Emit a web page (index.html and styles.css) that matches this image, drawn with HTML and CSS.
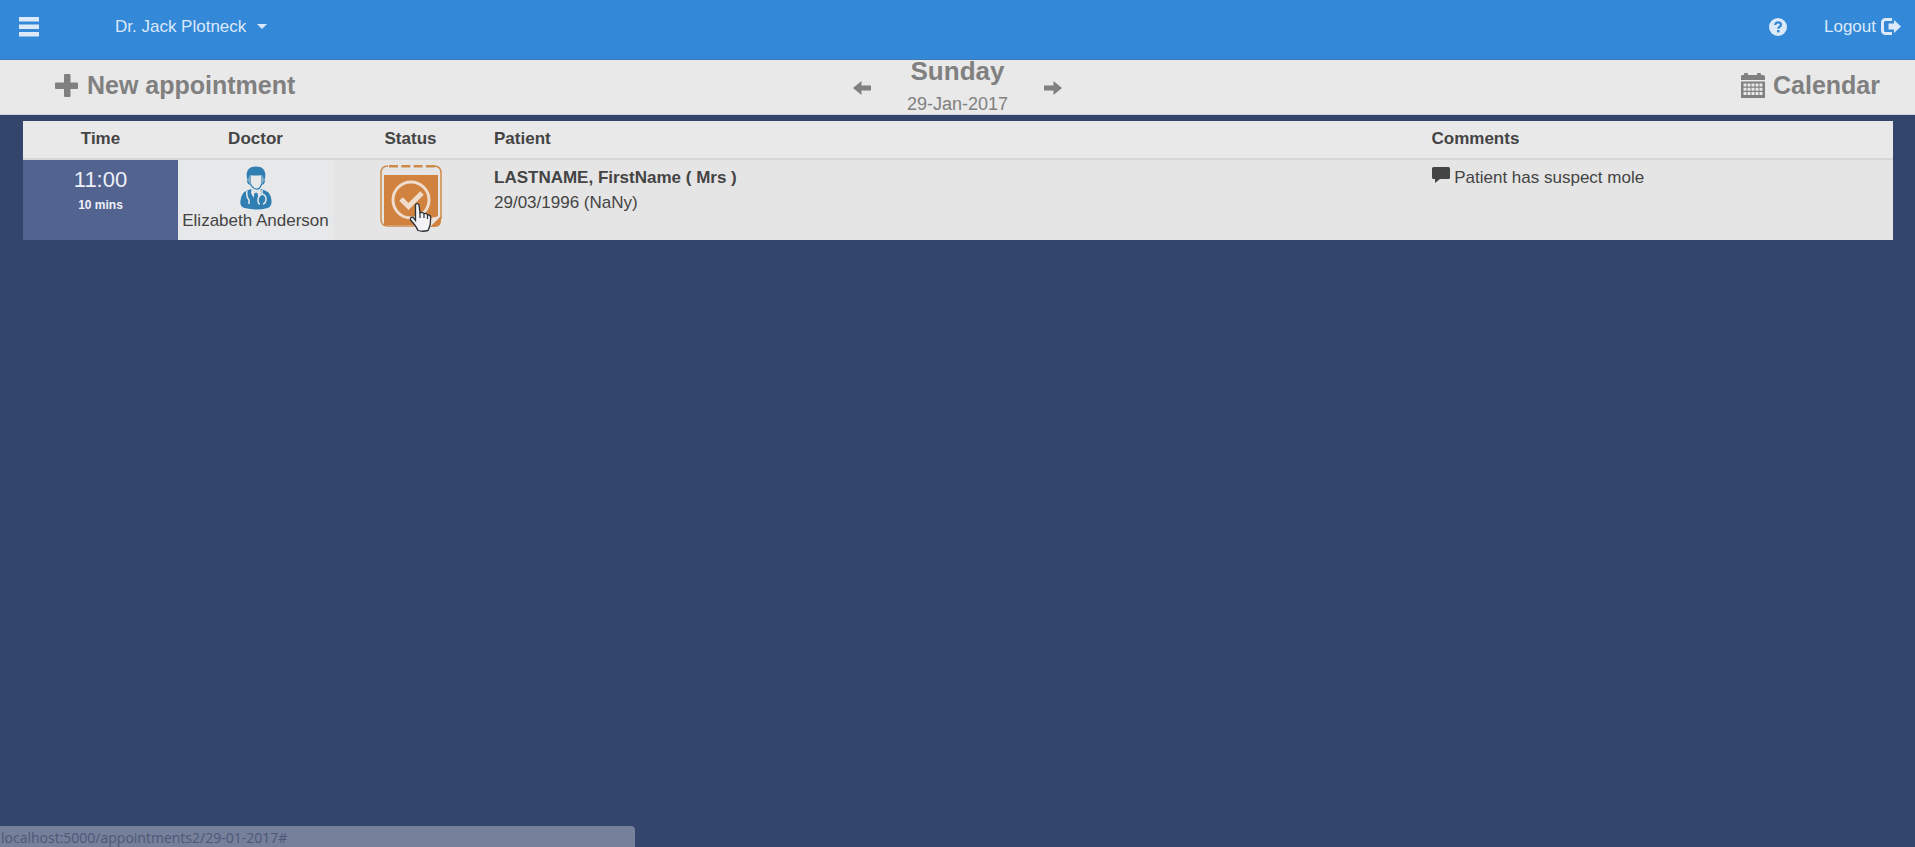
FILE: index.html
```html
<!DOCTYPE html>
<html lang="en">
<head>
<meta charset="utf-8">
<title>Appointments</title>
<link rel="stylesheet" href="styles.css">
</head>
<body>
<header class="navbar">
  <button class="nav-btn menu" aria-label="Menu">
    <svg width="20" height="20" viewBox="0 0 20 20" fill="currentColor"><path d="M0 0h20v4.500H0zM0 7.500h20v4.500H0zM0 15h20v4.500H0z"/></svg>
  </button>
  <button class="nav-btn user">Dr. Jack Plotneck <span class="caret"></span></button>
  <a class="nav-btn help" href="#" aria-label="Help">
    <svg width="18" height="18" viewBox="0 0 18 18"><circle cx="9" cy="9" r="9" fill="currentColor"/><path d="M6.200 7.100C6.200 5.300 7.400 4.400 9.100 4.400s2.900 1 2.900 2.500c0 1.900-2.700 1.800-2.700 3.800" fill="none" stroke="#3388d8" stroke-width="2.200"/><path d="M8 12h2.500v2.300H8z" fill="#3388d8"/></svg>
  </a>
  <a class="nav-btn logout" href="#">Logout
    <svg width="20" height="17" viewBox="0 0 20 17"><path d="M11 1.500H4.500a3 3 0 0 0-3 3v8a3 3 0 0 0 3 3H11" fill="none" stroke="currentColor" stroke-width="3"/><path d="M7.500 5.500H13V2l7 6.500-7 6.500v-3.500H7.500z" fill="currentColor"/></svg>
  </a>
</header>
<nav class="toolbar">
  <a class="tool" href="#">
    <svg width="24" height="24" viewBox="0 0 24 24" fill="currentColor"><path d="M10 0h4.500a1 1 0 0 1 1 1v7.500H22a1 1 0 0 1 1 1V14a1 1 0 0 1-1 1h-6.500v7a1 1 0 0 1-1 1H10a1 1 0 0 1-1-1v-7H1a1 1 0 0 1-1-1V9.500a1 1 0 0 1 1-1h8V1a1 1 0 0 1 1-1z"/></svg>
    New appointment</a>
  <div class="day">
    <a href="#" aria-label="Previous day"><svg width="18" height="14" viewBox="0 0 18 14" fill="currentColor"><path d="M0 7l8.500-7v4.500H18v5H8.500V14z"/></svg></a>
    <div class="date"><strong>Sunday</strong><span>29-Jan-2017</span></div>
    <a href="#" aria-label="Next day"><svg width="18" height="14" viewBox="0 0 18 14" fill="currentColor"><path d="M18 7L9.500 0v4.500H0v5h9.500V14z"/></svg></a>
  </div>
  <a class="tool calendar" href="#">
    <svg width="24" height="26" viewBox="0 0 24 26" fill="currentColor"><path d="M1 2h2V1q0-1 1-1h2q1 0 1 1v1h9V1q0-1 1-1h2q1 0 1 1v1h2q2 0 2 2v3H0V4q0-2 1-2z"/><path fill-rule="evenodd" d="M0 8.500h24V25H0zM6.500 10.500v3h3v-3zM10.500 10.500v3h3v-3zM14.500 10.500v3h3v-3zM18.500 10.500v3h3v-3zM2.500 14.700v3h3v-3zM6.500 14.700v3h3v-3zM10.500 14.700v3h3v-3zM14.500 14.700v3h3v-3zM18.500 14.700v3h3v-3zM2.500 18.900v3h3v-3zM6.500 18.900v3h3v-3zM10.500 18.900v3h3v-3zM14.500 18.900v3h3v-3zM18.500 18.900v3h3v-3zM2.500 10.500v3h3v-3z"/></svg>
    Calendar</a>
</nav>
<main class="content">
  <table class="appointments">
    <colgroup><col class="narrow"><col class="narrow"><col class="narrow"><col><col class="quarter"></colgroup>
    <thead>
      <tr><th class="center">Time</th><th class="center">Doctor</th><th class="center">Status</th><th>Patient</th><th>Comments</th></tr>
    </thead>
    <tbody>
      <tr>
        <td class="time center"><div class="hour">11:00</div><div class="mins">10 mins</div></td>
        <td class="doctor center">
          <svg width="34" height="44" viewBox="0 0 34 44"><path d="M8.500 14C6 6 9 .5 17 .5S28 6 25.500 14q1 1-.5 4l-2 1c2-4 2-7 0-10q-6 1-12 0c-2 3-2 6 0 10l-2-1q-1.500-3-.5-4z" fill="#2f7fb2"/><path d="M11 9v8q2 5 6 6t6-6V9" fill="none" stroke="#2f7fb2" stroke-width="1.200"/><path d="M12 23L17 27l5-4 5 2q5 2 5.500 9.500.5 6-4 7.500-11 3-23 0-5-1.500-4-7.500Q2.500 27 7 25z" fill="#2f7fb2"/><path d="M12.500 23L17 27l4.500-4 .5 4-5 9-5-9z" fill="#e7e8ea"/><path d="M15.500 27h3l1.500 8-3 4-3-4z" fill="#2f7fb2"/><path d="M8 25q-1 6 2 9v4M23 28q-4 2-4 6t2 4M23 24v4q4 1 4 5t-3 5" fill="none" stroke="#e7e8ea" stroke-width="1.500"/></svg>
          <div class="name">Elizabeth Anderson</div>
        </td>
        <td class="status center">
          <button class="status-btn" aria-label="Confirm appointment">
            <svg width="62" height="63" viewBox="0 0 62 63"><path d="M1 12V8q0-7 7-7M54 1q7 0 7 7v4M1 10v44q0 7 7 7h40M61 10v44" fill="none" stroke="#cf8a4a" stroke-width="1.500"/><path d="M9 1.200h46" stroke="#cf8a4a" stroke-width="2.400" stroke-dasharray="9 3.300"/><path d="M4 10h54v41L49 60H4z" fill="#d0823e"/><circle cx="31" cy="35" r="18" fill="none" stroke="#efdccd" stroke-width="3"/><path d="M21 34l7.500 7.500L42 28" fill="none" stroke="#efdccd" stroke-width="5"/><path d="M50 59V53l10-2z" fill="#eee0d6"/><path d="M61 51v5q0 6-7 6h-4z" fill="#d0823e"/></svg>
          </button>
          <svg class="pointer" width="23" height="30" viewBox="0 0 22 30"><path d="M6 2.500Q8 .5 9.500 3l1 8q2.500-1.500 4 .7 3-1 3.500 1.300 3-.5 3.200 2.500l-.5 7q-.7 3-2.200 6-5.500 1.500-10 0-2-5-7.500-10.500-.5-3 2.500-2.800L6 18.500z" fill="#f3f3f6" stroke="#2c3138" stroke-width="1.300"/><path d="M10.500 11v5M14.500 12v4M18 13v4" stroke="#2c3138" stroke-width="1.200"/></svg>
        </td>
        <td><strong>LASTNAME, FirstName ( Mrs )</strong><div>29/03/1996 (NaNy)</div></td>
        <td><svg class="comment" width="18" height="16" viewBox="0 0 18 16"><path d="M1.500 0h15Q18 0 18 1.500v9q0 1.500-1.500 1.500H8l-5 4v-4H1.500Q0 12 0 10.500v-9Q0 0 1.500 0z" fill="currentColor"/></svg> Patient has suspect mole</td>
      </tr>
    </tbody>
  </table>
</main>
<div class="link-status">localhost:5000/appointments2/29-01-2017#</div>
</body>
</html>
```
FILE: styles.css
```css
* { box-sizing: border-box; }
body {
  margin: 0;
  min-height: 100vh;
  background: #34456c;
  color: #444;
  font: 17px/25px "Liberation Sans", Arial, sans-serif;
}
svg { display: block; flex: none; }
a { color: inherit; text-decoration: none; }
button { font: inherit; color: inherit; background: none; border: 0; padding: 0; cursor: pointer; }

.navbar {
  display: flex;
  align-items: center;
  height: 60px;
  padding: 0 14px 6px 19px;
  background: #3388d8;
  border-bottom: 1px solid #3c79b6;
  color: #dce9f8;
}
.nav-btn { display: flex; align-items: center; }
.user { margin-left: 76px; gap: 11px; }
.caret { border: 5px solid transparent; border-top-color: currentColor; border-bottom: 0; }
.help { margin-left: auto; }
.logout { margin-left: 37px; gap: 5px; }

.toolbar {
  display: grid;
  grid-template-columns: 1fr auto 1fr;
  grid-template-rows: 100%;
  align-items: center;
  height: 55px;
  padding: 0 35px 0 55px;
  background: #e9e9e9;
  border-bottom: 1px solid #ccd2de;
  color: #808080;
}
.tool { display: flex; align-items: center; gap: 8px; padding-bottom: 3px; font-size: 25px; font-weight: bold; }
.calendar { justify-self: end; }
.day { display: flex; align-items: center; gap: 36px; padding-top: 2px; margin-right: 20px; }
.date { display: flex; flex-direction: column; align-items: center; font-size: 18px; line-height: 33px; }
.date strong { font-size: 26px; }

.content { padding: 6px 22px 0 23px; }
.appointments { width: 100%; table-layout: fixed; border-collapse: collapse; background: #e5e5e5; }
.narrow { width: 155px; }
.quarter { width: 25%; }
th, td { padding: 5px 6px; text-align: left; vertical-align: top; }
th { height: 38px; background: #e9e9ea; border-bottom: 2px solid #d6d8d8; }
td { height: 81px; }
.center { text-align: center; }
.time { background: #53638f; color: #eef0f8; }
.hour { font-size: 22px; line-height: 30px; }
.mins { font-size: 12px; font-weight: bold; line-height: 20px; }
.doctor { padding: 6px 0 0; background: #e7e8ea; }
.doctor svg, .status-btn { margin: 0 auto; }
.name { line-height: 22px; white-space: nowrap; }
.status { position: relative; }
.status-btn { display: block; }
.pointer { position: absolute; left: 76px; top: 42px; }
.comment { display: inline-block; }

.link-status {
  position: fixed;
  left: 0;
  bottom: 0;
  width: 635px;
  height: 21px;
  padding: 2px 0 0 1px;
  border-radius: 0 4px 0 0;
  background: #76809a;
  color: #4c5878;
  font: 14px/19px "Open Sans", "Noto Sans", sans-serif;
}
```
